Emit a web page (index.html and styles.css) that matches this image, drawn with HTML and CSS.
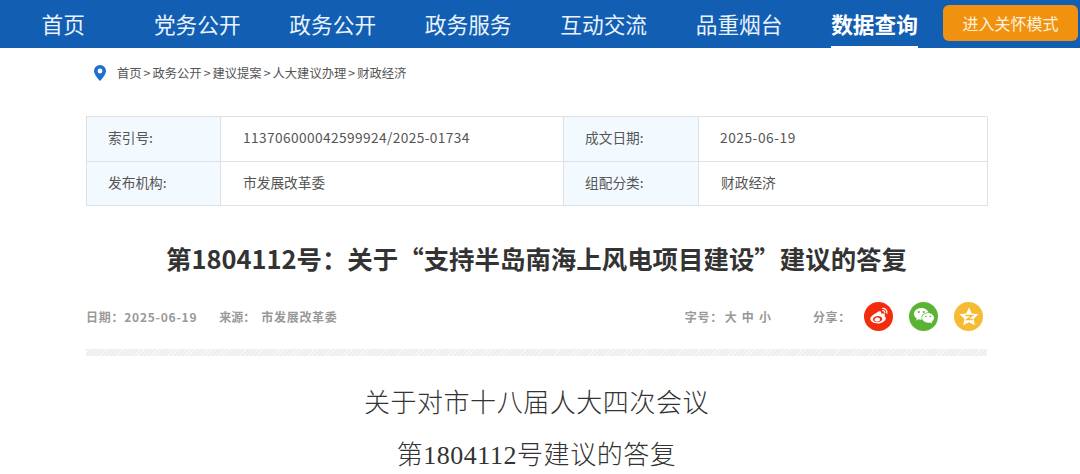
FILE: index.html
```html
<!DOCTYPE html>
<html lang="zh-CN">
<head>
    <meta charset="UTF-8" />
    <title>第1804112号：关于“支持半岛南海上风电项目建设”建议的答复</title>
    <link rel="stylesheet" href="styles.css">
</head>
<body>
<header class="nav">
    <a href="#" class="nav-item nav-home">首页</a>
    <a href="#" class="nav-item">党务公开</a>
    <a href="#" class="nav-item">政务公开</a>
    <a href="#" class="nav-item">政务服务</a>
    <a href="#" class="nav-item">互动交流</a>
    <a href="#" class="nav-item">品重烟台</a>
    <a href="#" class="nav-item nav-active">数据查询</a>
    <a href="#" class="care-button">进入关怀模式</a>
</header>
<div class="container">
    <div class="crumbs">
        <svg class="pin" width="12" height="16" viewBox="0 0 12 16">
            <path fill="#1f6fd0" fill-rule="evenodd" d="M6 0a6 6 0 0 1 6 6c0 4-6 10-6 10S0 10 0 6a6 6 0 0 1 6-6zm0 3.600a2.400 2.400 0 1 0 0 4.800 2.400 2.400 0 0 0 0-4.800z"/>
        </svg>
        <span>首页<i class="sep">&gt;</i>政务公开<i class="sep">&gt;</i>建议提案<i class="sep">&gt;</i>人大建议办理<i class="sep">&gt;</i>财政经济</span>
    </div>
    <div class="info-table">
        <div class="cell label">索引号:</div>
        <div class="cell code">113706000042599924/2025-01734</div>
        <div class="cell label">成文日期:</div>
        <div class="cell date">2025-06-19</div>
        <div class="cell label">发布机构:</div>
        <div class="cell">市发展改革委</div>
        <div class="cell label">组配分类:</div>
        <div class="cell">财政经济</div>
    </div>
    <h1 class="title">第1804112号：关于“支持半岛南海上风电项目建设”建议的答复</h1>
    <div class="meta">
        <div class="meta-left">
            <span class="meta-date">日期：2025-06-19</span>
            <span class="meta-source">来源：</span>
            <span class="meta-org">市发展改革委</span>
        </div>
        <div class="meta-right">
            <span class="meta-size">字号：</span>
            <span class="size-links"><a href="#">大</a><a href="#">中</a><a href="#">小</a></span>
            <span class="meta-share">分享：</span>
            <a href="#" class="share share-weibo">
                <svg width="20" height="18" viewBox="0 0 20 18">
                    <path fill="#fff" fill-rule="evenodd" d="M8 5.500c1.200-.9 2.600-1.400 3.500-1 .8.400.9 1.200.5 2.300 1.900-.7 3.400-.5 3.800.6.200.6 0 1.200-.5 1.900 1 .4 1.500 1 1.500 1.900 0 2.600-3.700 5.300-8 5.300-3.800 0-7.500-1.700-7.500-4.700C1.300 10 4.500 7.200 8 5.500zM8.400 9c-2.600.2-4.700 1.800-4.500 3.500.2 1.700 2.400 2.900 5 2.700 2.600-.2 4.600-1.800 4.400-3.500C13.100 10 11 8.800 8.400 9zm-.7 1.500c1.500-.3 3 .4 3.300 1.500.3 1.200-.7 2.300-2.200 2.600-1.500.3-2.900-.4-3.200-1.500-.3-1.100.6-2.300 2.100-2.600z"/>
                    <path fill="none" stroke="#fff" stroke-width="1.200" stroke-linecap="round" d="M13.500 1.500c2.600-.4 4.900 1.800 4.400 4.700M13.800 3.700c1.200-.2 2.200.8 2 2.100"/>
                </svg>
            </a>
            <a href="#" class="share share-wechat">
                <svg width="22" height="18" viewBox="0 0 22 18">
                    <path fill="#fff" d="M8.300 1C4.300 1 1 3.600 1 6.900c0 1.900 1.100 3.500 2.800 4.600L3.100 13.600l2.500-1.300c.8.200 1.600.4 2.500.4h.7c-.2-.6-.3-1.200-.3-1.800 0-3 2.800-5.400 6.400-5.400h.6C14.800 3 11.900 1 8.300 1z"/>
                    <path fill="#fff" d="M21 10.800c0-2.700-2.700-4.900-5.900-4.900s-6 2.200-6 4.900 2.700 4.900 6 4.900c.7 0 1.300-.1 2-.3l2 1.100-.5-1.800c1.500-.9 2.400-2.300 2.400-3.900z"/>
                    <circle cx="5.800" cy="5" r="1" fill="#5bb334"/><circle cx="10.700" cy="5" r="1" fill="#5bb334"/>
                    <circle cx="13" cy="9.500" r=".8" fill="#5bb334"/><circle cx="17.200" cy="9.500" r=".8" fill="#5bb334"/>
                </svg>
            </a>
            <a href="#" class="share share-star">
                <svg width="20" height="19" viewBox="0 0 20 19">
                    <path fill="#fff" d="M10 .5l2.800 5.900 6.700.9-4.900 4.500 1.200 6.500L10 15.200l-5.800 3.100 1.200-6.500L.5 7.300l6.700-.9z"/>
                    <path fill="none" stroke="#f6bb34" stroke-width="1.500" d="M6.500 8.600h6.800l-5.400 4h6"/>
                </svg>
            </a>
        </div>
    </div>
    <div class="divider"></div>
    <div class="article">
        <p>关于对市十八届人大四次会议</p>
        <p>第1804112号建议的答复</p>
    </div>
</div>
</body>
</html>
```

FILE: styles.css
```css
html, body {
    height: 100%;
}

body {
    margin: 0;
    background-color: #fff;
    color: #555;
    font-family: "Noto Sans CJK SC", "Noto Sans", sans-serif;
    overflow: hidden;
}

a {
    color: inherit;
    text-decoration: none;
}

.nav {
    display: flex;
    height: 48px;
    padding-left: 41.5px;
    background-color: #115eb2;
    box-sizing: border-box;
}

.nav-item {
    margin-right: 48.7px;
    color: #eaf2fb;
    font-size: 21.7px;
    line-height: 47px;
    white-space: nowrap;
}

.nav-home {
    margin-right: 69px;
}

.nav-active {
    margin-right: 25px;
    color: #fff;
    font-weight: 700;
    border-bottom: 2px solid #fff;
    height: 46px;
}

.care-button {
    width: 135px;
    height: 36px;
    margin-top: 5px;
    border-radius: 6px;
    background-color: #f0920f;
    color: #fdf0dc;
    font-size: 16px;
    line-height: 36px;
    text-align: center;
}

.container {
    width: 901px;
    margin-left: 86px;
}

.crumbs {
    display: flex;
    align-items: center;
    height: 50px;
    padding-left: 8px;
    color: #555;
    font-size: 12.3px;
    line-height: 16px;
}

.sep {
    margin: 0 2px;
    font-style: normal;
}

.pin {
    margin-right: 11px;
}

.info-table {
    display: grid;
    grid-template-columns: 134px 343px 135px 289px;
    grid-auto-rows: 44.5px;
    margin-top: 18px;
    border-top: 1px solid #dde1e6;
    border-left: 1px solid #dde1e6;
    box-sizing: border-box;
    height: 90px;
    font-size: 13.7px;
}

.cell {
    display: flex;
    align-items: center;
    padding-left: 22px;
    padding-bottom: 3px;
    border-right: 1px solid #dde1e6;
    border-bottom: 1px solid #dde1e6;
    box-sizing: border-box;
}

.label {
    padding-left: 21px;
    background-color: #f3faff;
}

.code {
    letter-spacing: 0.4px;
}

.date {
    padding-left: 21px;
    letter-spacing: 0.55px;
}

.title {
    margin: 32px 0 0;
    color: #333;
    font-size: 25.45px;
    font-weight: 700;
    line-height: 40px;
    text-align: center;
}

.meta {
    display: flex;
    justify-content: space-between;
    align-items: center;
    height: 30px;
    margin-top: 23px;
    color: #999;
    font-size: 12px;
    font-weight: 700;
}

.meta-left,
.meta-right {
    display: flex;
    align-items: center;
}

.meta-date {
    margin-right: 22px;
    letter-spacing: 0.75px;
}

.meta-source {
    margin-right: 6px;
}

.meta-org {
    letter-spacing: 0.7px;
}

.meta-size {
    margin-right: 2px;
    letter-spacing: 0.7px;
}

.size-links {
    display: flex;
    gap: 5px;
    margin-right: 42px;
}

.meta-share {
    margin-right: 13px;
    letter-spacing: 0.7px;
}

.share {
    display: flex;
    justify-content: center;
    align-items: center;
    width: 29px;
    height: 29px;
    margin-left: 16px;
    border-radius: 50%;
}

.meta-share + .share {
    margin-left: 0;
}

.share-weibo {
    background-color: #f32c0d;
}

.share-wechat {
    background-color: #5bb334;
}

.share-star {
    margin-right: 4px;
    background-color: #f6bb34;
}

.divider {
    height: 7px;
    margin-top: 18px;
    background: repeating-linear-gradient(135deg, #eee 0, #eee 2px, #f8f8f8 2px, #f8f8f8 3px);
}

.article {
    margin-top: 22px;
    color: #333;
    font-family: "Liberation Serif", "Noto Sans CJK SC", serif;
    font-size: 26px;
    font-weight: 300;
    letter-spacing: 0.55px;
    text-align: center;
}

.article p {
    margin: 0;
    line-height: 52px;
}
```
